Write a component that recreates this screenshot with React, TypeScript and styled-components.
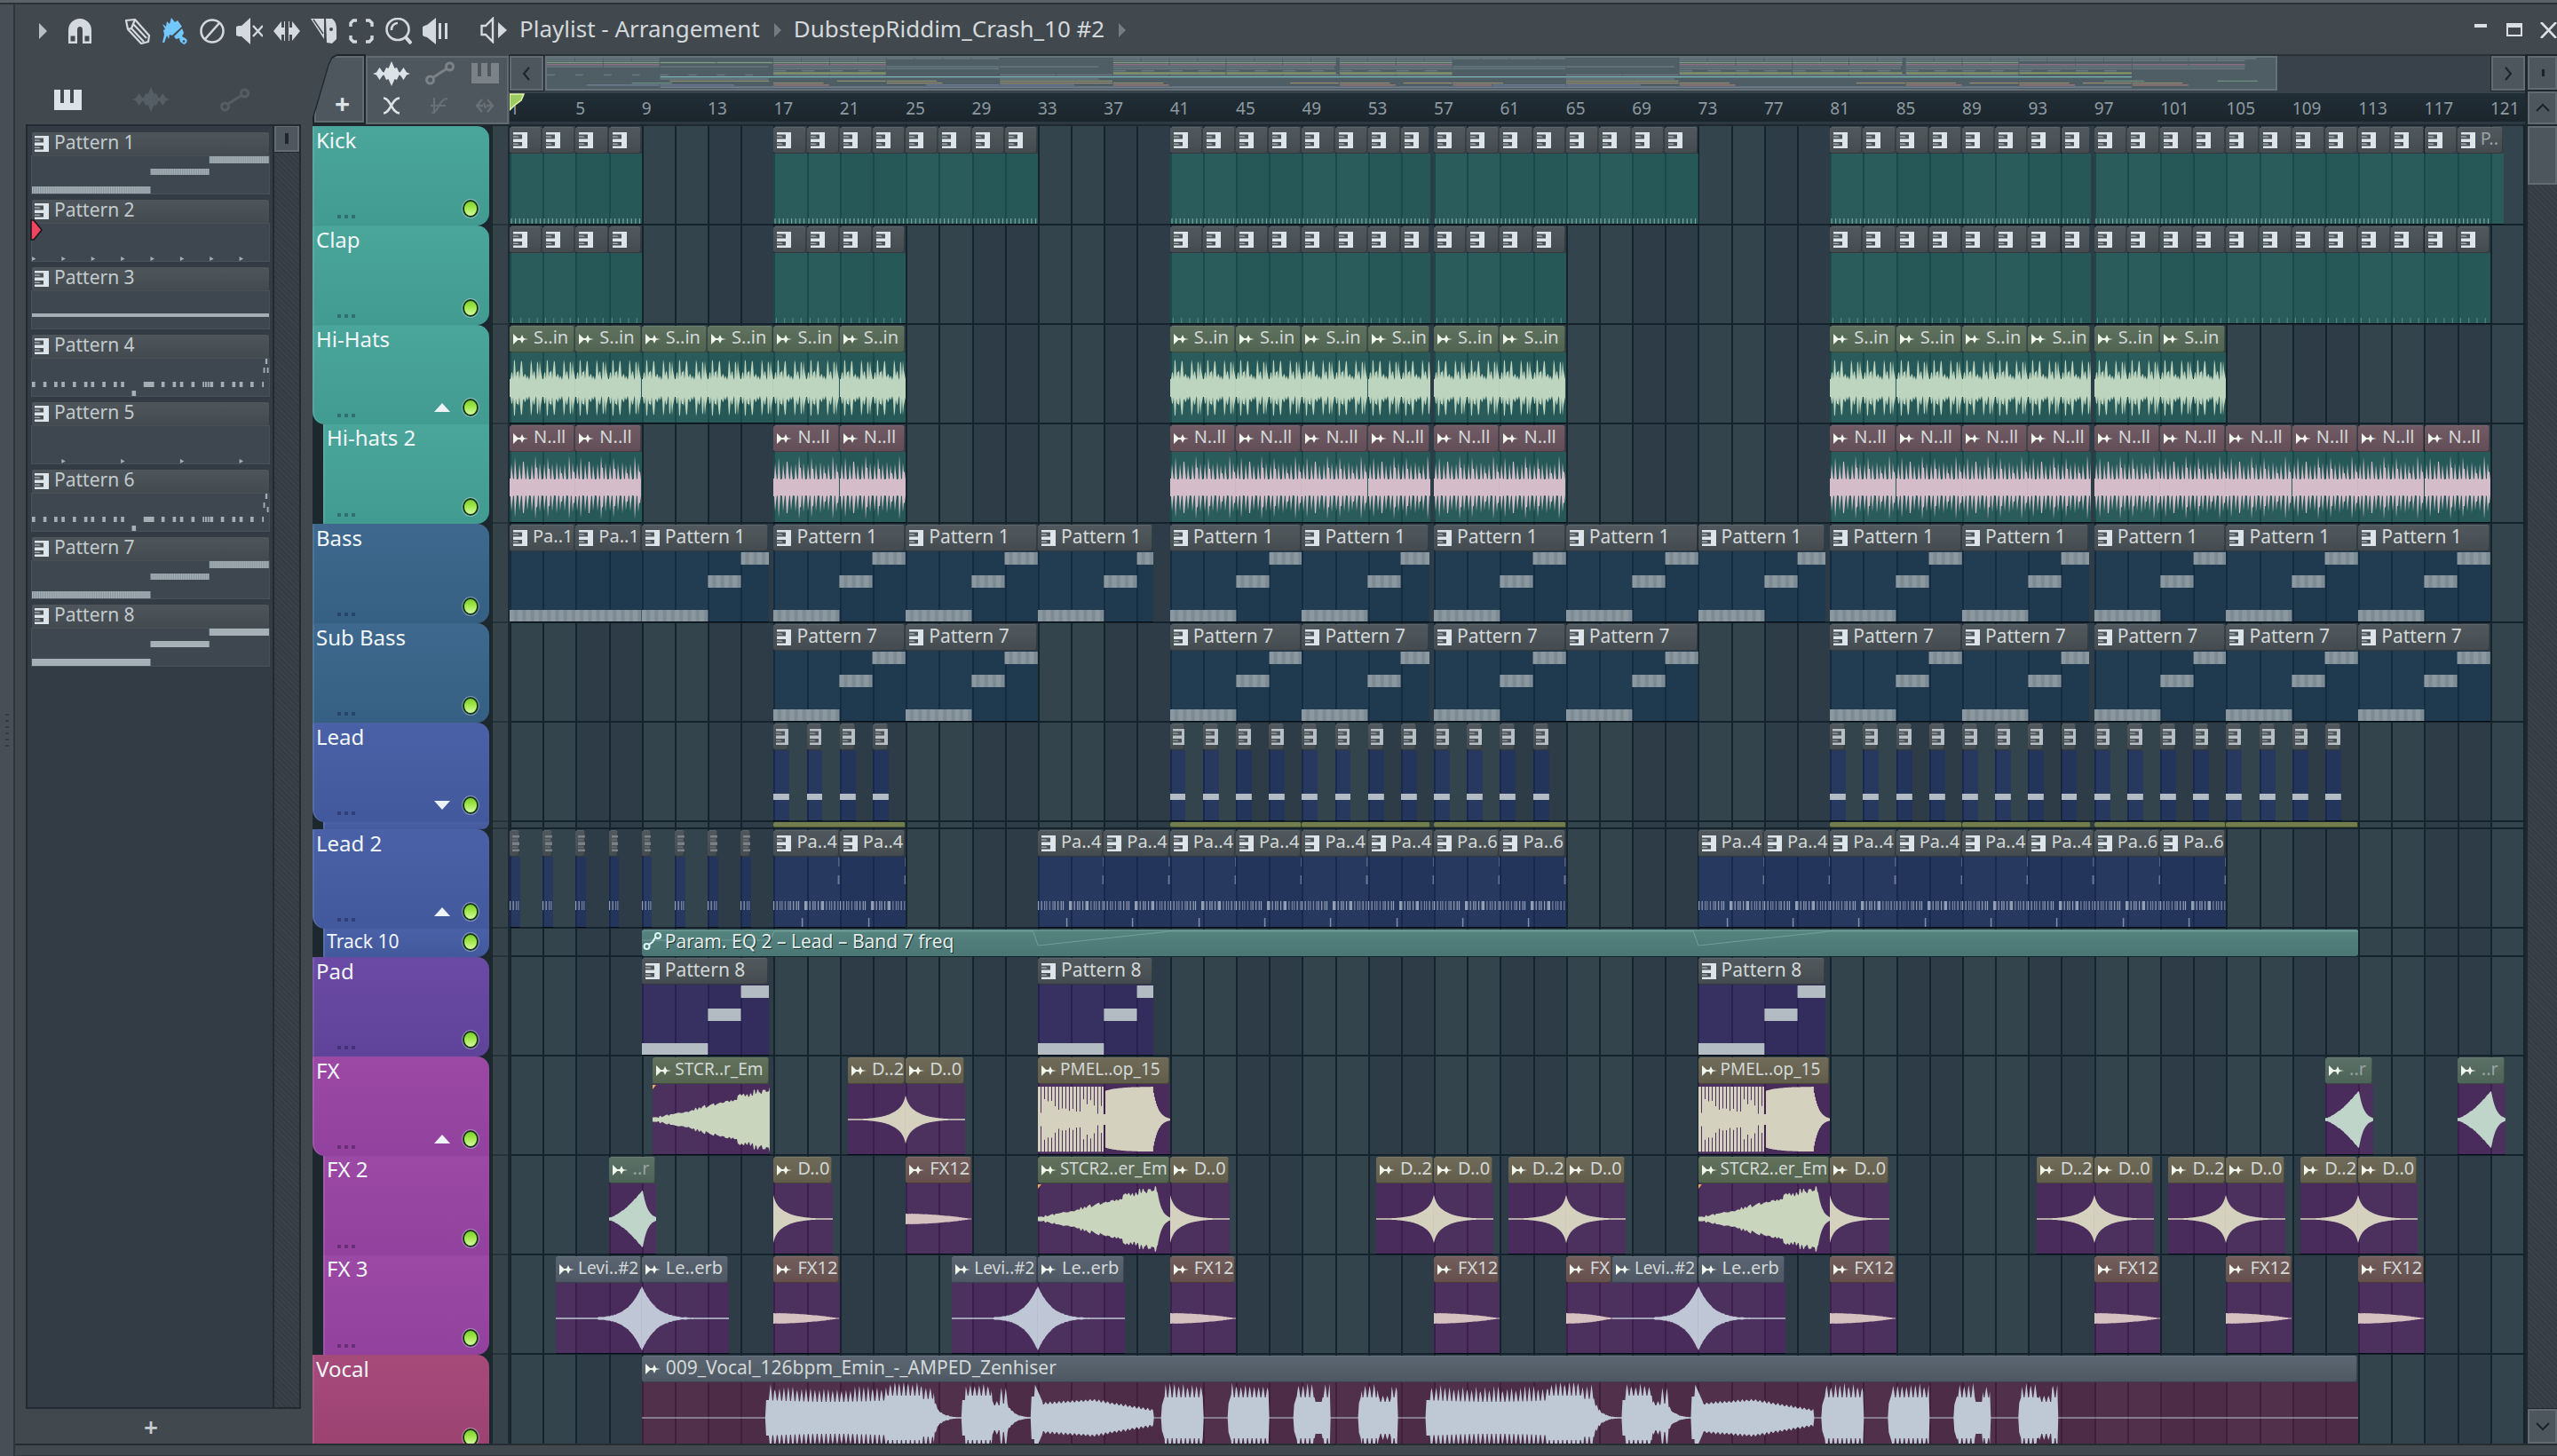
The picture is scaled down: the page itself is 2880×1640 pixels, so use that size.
import React from 'react';
import styled, { createGlobalStyle, css } from 'styled-components';

/* ---------- base ---------- */

const Global = createGlobalStyle`
  * { box-sizing: border-box; }
  html, body { margin: 0; padding: 0; background: #41494f; }
  body { font-family: "Noto Sans", "Open Sans", sans-serif; color: #d5dadd; overflow: hidden; }
  button { font: inherit; color: inherit; border: 0; padding: 0; margin: 0; background: none; cursor: pointer; }
`;

const BARS = 122.1;
const PX = 18.6;
const pct = (bars: number) => `${(bars / BARS) * 100}%`;

/* ---------- icons ---------- */

const PianoKeys = ({ dim = false }: { dim?: boolean }) => (
  <svg width="16" height="18" viewBox="0 0 16 18" fill={dim ? '#8a9297' : '#dce6ea'} preserveAspectRatio="xMinYMid slice">
    <path d="M0 0H16V18H0V15.500H10V11H0V7.500H10V2.600H0Z" />
    <path d="M0 4.200H5L7 5.800H0ZM0 12.400H5L7 14H0Z" opacity="0.6" />
  </svg>
);

const SampleIcon = ({ color }: { color: string }) => (
  <svg width="17" height="12" viewBox="0 0 17 12" fill={color}>
    <path d="M0 0L5.200 5H7.500L8.600 4.200L10 1L11.400 4.200L12.500 5.200L17 6L12.500 6.800L11.400 7.800L10 11L8.600 7.800L7.500 7H5.200L0 12Z" />
  </svg>
);

const PianoUp = () => (
  <svg width="31" height="23" viewBox="0 0 31 23" fill="currentColor">
    <path d="M0 0H7V15H11V0H13V15H13V0H18V15H22V0H24V15H24V0H31V23H0Z" />
  </svg>
);

const WaveBig = () => (
  <svg width="42" height="28" viewBox="0 0 42 28" fill="currentColor">
    <path d="M0 14L4 12.500L7.500 7L11 12L12.500 12.500L15 7L17.500 8L21 0L24.500 8L27 7L29.500 12.500L31 12L34.500 7L38 12.500L42 14L38 15.500L34.500 21L31 16L29.500 15.500L27 21L24.500 20L21 28L17.500 20L15 21L12.500 15.500L11 16L7.500 21L4 15.500Z" />
  </svg>
);

const NodeIcon = () => (
  <svg width="33" height="27" viewBox="0 0 33 27" fill="none" stroke="currentColor" strokeWidth="3">
    <circle cx="5.500" cy="21" r="4" />
    <circle cx="27.500" cy="6" r="4" />
    <path d="M9 18L24 8.500" />
  </svg>
);

const TI: Record<string, React.ReactNode> = {
  play: <path d="M11 6L20 15L11 24Z" fill="#b9c0c4" />,
  magnet: (
    <>
      <path d="M2 29V14A13 13 0 0 1 28 14V29H18V14A3 4 0 0 0 12 14V29Z" />
      <path d="M4.500 20.500H9.500V26.500H4.500ZM20.500 20.500H25.500V26.500H20.500Z" fill="#41494f" />
    </>
  ),
  pencil: (
    <g fill="none" stroke="currentColor" strokeWidth="2.200" strokeLinejoin="round">
      <path d="M2 3L12 2L28 20L27 27L19 29L4 13Z" />
      <path d="M4 13L8 12L12 2M8 12L22 27M10 7L25 23" />
    </g>
  ),
  brush: (
    <g fill="#72c7ff">
      <path d="M1 7L5 10L6 4L9 7L11 0L15 5L18 3L23 10L12 20L9 19L8 24L6 20L3 28L1 28L3 19L2 14L4 13Z" />
      <path d="M14 21L23 12L25 17L23 21L28 24A4 4 0 0 1 25 30L21 27L20 23L16 24Z" />
      <path d="M12.500 20.500L23.500 10.500" stroke="#41494f" strokeWidth="1.200" />
      <circle cx="25" cy="26.500" r="1.300" fill="#41494f" />
    </g>
  ),
  forbid: (
    <g fill="none" stroke="currentColor" strokeWidth="2.600">
      <circle cx="15" cy="15" r="12.500" />
      <path d="M7 24L23 6" />
    </g>
  ),
  mute: (
    <>
      <path d="M0 11C0 9 4 9 6 9L16 0V30L6 21C4 21 0 21 0 19Z" />
      <path d="M19 9L30 21M30 9L19 21" stroke="currentColor" strokeWidth="2.400" />
    </>
  ),
  slip: <path d="M0 15L9 4V11H12V4H13V26H12V19H9V26ZM30 15L21 4V11H18V4H17V26H18V19H21V26Z" />,
  slice: (
    <>
      <path d="M0 1H15V24Z" />
      <path d="M3 2L14 18" stroke="#41494f" strokeWidth="1.500" />
      <path d="M17 1H24C28 4 29 8 29 14V24L24 29L18 28Z" />
      <circle cx="23" cy="13" r="2" fill="#41494f" />
    </>
  ),
  select: (
    <path d="M3 10V6L6 3H10M20 3H24L27 6V10M27 20V24L24 27H20M10 27H6L3 24V20" fill="none" stroke="currentColor" strokeWidth="3.400" />
  ),
  zoom: (
    <g fill="none" stroke="currentColor">
      <ellipse cx="14" cy="13" rx="12.500" ry="12" strokeWidth="2.600" />
      <path d="M7 14A7 7 0 0 1 14 6" strokeWidth="2.600" />
      <path d="M23 22L29 29" strokeWidth="4" />
    </g>
  ),
  playback: (
    <>
      <path d="M0 11C0 9 3 9 5 8L15 0V30L5 22C3 21 0 21 0 19Z" />
      <path d="M18 6H21V24H18ZM25 6H28V24H25Z" />
    </>
  ),
  preview: (
    <>
      <path d="M1.500 10H6L14 2V28L6 20H1.500Z" fill="none" stroke="currentColor" strokeWidth="2.400" />
      <path d="M20 6L30 15L20 24Z" />
    </>
  ),
};

const ToolIcon = ({ name }: { name: string }) => (
  <svg width="30" height="30" viewBox="0 0 30 30" fill="currentColor" aria-hidden>
    {TI[name]}
  </svg>
);

/* ---------- frame ---------- */

const App$ = styled.div`
  height: 100vh;
  display: flex;
  flex-direction: column;
  background: #41494f;
`;
const TopStrip = styled.div`
  height: 5px;
  flex: none;
  background: #5a626a;
  border-bottom: 2px solid #2b3339;
`;
const Shell = styled.div`
  flex: 1;
  min-height: 0;
  display: flex;
`;
const Grip = styled.div`
  width: 17px;
  flex: none;
  border-right: 2px solid #2f373d;
  background: #474e55;
  display: flex;
  flex-direction: column;
  align-items: center;
  justify-content: center;
  gap: 5px;
  i { width: 4px; height: 2px; background: #343b41; }
`;
const Main = styled.div`
  flex: 1;
  min-width: 0;
  display: flex;
  flex-direction: column;
`;
const Bottom = styled.div`
  height: 14px;
  flex: none;
  border-top: 2px solid #252d33;
  border-bottom: 1px solid #343b41;
`;
const Toolbar = styled.header`
  height: 56px;
  flex: none;
  display: flex;
  align-items: center;
  padding: 2px 0 0 10px;
  color: #d3d9dc;
`;
const ToolGroup = styled.div`
  display: flex;
  padding: 2px 23px 0 0;
`;
const ToolBtn = styled.button`
  width: 42px;
  height: 42px;
  display: grid;
  place-items: center;
`;
const Crumb = styled.span`
  font-size: 26px;
  line-height: 36px;
  padding: 0 16px 4px 8px;
  color: #d3d8da;
  white-space: nowrap;
`;
const Caret = styled.i`
  border-left: 8px solid #737c82;
  border-top: 8px solid transparent;
  border-bottom: 8px solid transparent;
  margin-right: 6px;
`;
const WinButtons = styled.div`
  margin-left: auto;
  display: flex;
`;
const WinBtn = styled.button<{ $last?: boolean }>`
  width: ${(p) => (p.$last ? 29 : 38)}px;
  height: 38px;
  display: grid;
  place-items: center;
  justify-items: ${(p) => (p.$last ? 'end' : 'center')};
`;
const Work = styled.div`
  flex: 1;
  min-height: 0;
  display: flex;
`;

/* ---------- pattern browser ---------- */

const Browser = styled.aside`
  width: 335px;
  flex: none;
  padding: 0 13px 0 12px;
  display: flex;
  flex-direction: column;
`;
const BrowserTabs = styled.div`
  height: 79px;
  padding: 24px 24px 0 0;
  display: flex;
`;
const BrowserTab = styled.button<{ $on?: boolean }>`
  width: 94px;
  height: 54px;
  display: grid;
  place-items: center;
  color: ${(p) => (p.$on ? '#dbe3e7' : '#555e64')};
`;
const ListFrame = styled.div`
  flex: 1;
  min-height: 0;
  display: flex;
  border: 2px solid #222b31;
  background: #333c44;
`;
const PatternList = styled.div`
  flex: 1;
  padding: 7px 3px 0 4px;
  display: flex;
  flex-direction: column;
  gap: 6px;
`;
const hatch = css`
  background: repeating-linear-gradient(45deg, #343b42 0 2px, #3a4148 2px 4px);
`;
const ListScroll = styled.div`
  width: 30px;
  border-left: 2px solid #222b31;
  ${hatch}
`;
const ListThumb = styled.div`
  height: 29px;
  background: #4f565d;
  border: 2px solid #646c73;
  border-top-width: 1px;
  outline: 1px solid #222b31;
  display: grid;
  place-items: center;
  &::after { content: ''; width: 4px; height: 12px; background: #20272c; }
`;
const PatternItem = styled.button`
  position: relative;
  display: block;
  text-align: left;
  width: 100%;
`;
const PatternHead = styled.div`
  height: 26px;
  margin: 0 1px;
  padding-left: 3px;
  display: flex;
  align-items: center;
  gap: 6px;
  background: linear-gradient(#4e565b, #434b51);
  border-radius: 2px;
  font-size: 21px;
  line-height: 22px;
  color: #c3cacd;
  span { padding-bottom: 4px; }
`;
const PatternBody = styled.div`
  height: 44px;
  border: 1px solid #48515a;
  background: #3e4750;
  svg { display: block; width: 100%; height: 42px; }
`;
const RedMark = styled.svg`
  position: absolute;
  left: -1px;
  top: 22px;
`;
const AddPattern = styled.button`
  height: 39px;
  font-size: 28px;
  line-height: 40px;
  padding-right: 28px;
  color: #c5ccd0;
  font-weight: 600;
`;

const P4 = [0, 28, 55, 73, 101, 129, 146, 174, 202, 220, 276, 282, 288, 294, 320, 348, 366, 394, 422, 428, 434, 440, 467, 495, 513, 540, 569];

const MiniNotes = ({ n }: { n: number }) => {
  const c = '#a4afb5';
  if (n === 1 || n === 7 || n === 8) {
    const f = n === 8 ? '#a6b0b7' : 'url(#mini)';
    return (
      <svg viewBox="0 0 270 42" preserveAspectRatio="none">
        <rect x="0" y="34" width="135" height="8" fill={f} />
        <rect x="135" y="14" width="67" height="7" fill={f} />
        <rect x="202" y="0" width="68" height="8" fill={f} />
      </svg>
    );
  }
  if (n === 3) {
    return (
      <svg viewBox="0 0 270 42" preserveAspectRatio="none">
        <rect y="25" width="270" height="4" fill={c} />
      </svg>
    );
  }
  if (n === 2 || n === 5) {
    const xs = n === 2 ? [0, 1, 2, 3, 4, 5, 6, 7] : [1, 3, 5, 7];
    return (
      <svg viewBox="0 0 270 42" preserveAspectRatio="none" fill={c}>
        {xs.map((i) => (
          <path key={i} d={`M${i * 33.75} 37l4.500 2.500l-4.500 2.500z`} />
        ))}
      </svg>
    );
  }
  return (
    <svg viewBox="0 0 586 42" preserveAspectRatio="none" fill={c}>
      {P4.map((x) => (
        <rect key={x} x={x} y="26" width={x === 422 || x === 428 || x === 434 || x === 569 ? 4 : 8} height="6" />
      ))}
      <rect x="247" y="36" width="10" height="6" />
      <rect x="577" y="0" width="5" height="6" />
      <rect x="572" y="10" width="4" height="6" />
      <rect x="581" y={n === 6 ? 15 : 10} width="4" height="6" />
    </svg>
  );
};

/* ---------- playlist head ---------- */

const Playlist = styled.section`
  flex: 1;
  min-width: 0;
  display: flex;
  flex-direction: column;
`;
const HeadRow = styled.div`
  height: 81px;
  flex: none;
  display: flex;
  border-bottom: 2px solid #1d272d;
`;
const HeadTools = styled.div`
  width: 222px;
  flex: none;
  display: flex;
`;
const slant = css`clip-path: polygon(0 100%, 0 90%, 30% 13%, 36% 4%, 46% 0, 100% 0, 100% 100%);`;
const AddTab = styled.div`
  width: 60px;
  padding: 2px;
  background: #1d272d;
  ${slant}
`;
const AddTrack = styled.button`
  width: 100%;
  height: 100%;
  padding: 30px 0 0 7px;
  font-size: 30px;
  line-height: 44px;
  font-weight: 700;
  color: #dde3e6;
  background: #4f575e;
  border: 2px solid #636b72;
  ${slant}
`;
const ToolBox = styled.div`
  flex: 1;
  margin: 2px 1px 0 0;
  border: 2px solid #636b72;
  background: #4f575e;
  display: grid;
  grid-template-columns: 55px 53px 1fr;
  grid-template-rows: 34px 1fr;
`;
const BoxBtn = styled.button<{ $tone: string }>`
  display: grid;
  place-items: center;
  padding-right: 1px;
  padding-top: 1px;
  color: ${(p) => p.$tone};
`;
const HeadRight = styled.div`
  flex: 1;
  min-width: 0;
  display: flex;
  flex-direction: column;
`;
const OverviewRow = styled.div`
  height: 43px;
  flex: none;
  display: flex;
  background: #39414a;
  border-top: 2px solid #2a3238;
`;
const ScrollBtn = styled.button<{ $w?: number; $h?: number }>`
  width: ${(p) => p.$w ?? 38}px;
  height: ${(p) => p.$h ?? 39}px;
  flex: none;
  display: grid;
  place-items: center;
  background: #4d555d;
  border: 2px solid #636b72;
  outline: 1px solid #1d272d;
  svg { fill: none; stroke: #1c2328; stroke-width: 2; }
`;
const OverviewTrack = styled.div`
  flex: 1;
  padding-left: 2px;
`;
const OverviewThumb = styled.div`
  width: 89%;
  height: 39px;
  border: 2px solid #66727a;
  background: #4f5d65;
  svg { display: block; width: 100%; height: 35px; }
`;
const Ruler = styled.div`
  flex: 1;
  min-height: 0;
  position: relative;
  display: grid;
  grid-template-columns: repeat(30, 4fr) 2.1fr;
  background: linear-gradient(#222e36, #1a252c);
  border-top: 1px solid #37434b;
  border-bottom: 3px solid #2c3942;
  font-size: 19px;
  line-height: 34px;
  color: #8e9aa0;
  span { min-width: 0; white-space: nowrap; }
`;
const StartMark = styled.svg`
  position: absolute;
  left: 0;
  top: 0;
`;
const SideHead = styled.div`
  width: 36px;
  flex: none;
  padding: 2px 0 0 3px;
  display: flex;
  flex-direction: column;
  gap: 2px;
  background: #1d272d;
`;

/* ---------- tracks ---------- */

const TrackArea = styled.div`
  flex: 1;
  min-height: 0;
  display: flex;
  overflow: hidden;
  background: #1d272e;
`;
const Heads = styled.div`
  width: 201px;
  flex: none;
`;
const Head = styled.div<{ $c: string; $h: number; $child?: boolean; $first: boolean; $last: boolean; $parent: boolean }>`
  position: relative;
  height: ${(p) => p.$h}px;
  margin-left: ${(p) => (p.$child ? 12 : 0)}px;
  margin-right: 2px;
  padding: ${(p) => (p.$h > 100 ? 1 : 0)}px 12px 0 4px;
  display: flex;
  justify-content: space-between;
  background: ${(p) => p.$c};
  box-shadow: inset 2px 0 rgba(255, 255, 255, 0.1);
  border-top: ${(p) => (p.$first ? '1px solid rgba(255,255,255,.06)' : '0')};
  border-top-right-radius: ${(p) => (p.$first ? '14px' : 0)};
  border-bottom-right-radius: ${(p) => (p.$last ? '14px' : 0)};
  border-bottom-left-radius: ${(p) => (p.$parent ? '14px' : 0)};
`;
const TrackName = styled.span<{ $small?: boolean }>`
  font-size: ${(p) => (p.$small ? 21 : 24)}px;
  line-height: 28px;
  color: #f1f6f8;
  white-space: nowrap;
`;
const HeadControls = styled.div<{ $small?: boolean }>`
  display: flex;
  align-items: center;
  align-self: ${(p) => (p.$small ? 'center' : 'flex-end')};
  gap: 14px;
  padding-bottom: ${(p) => (p.$small ? 2 : 9)}px;
`;
const Led = styled.input`
  appearance: none;
  width: 18px;
  height: 20px;
  margin: 0;
  border-radius: 50%;
  border: 2px solid #183a1c;
  outline: 1px solid rgba(255, 255, 255, 0.35);
  background: linear-gradient(#7ccf2e, #a6ea4e 50%, #d8f9a4);
`;
const Fold = styled.button<{ $down?: boolean }>`
  width: 18px;
  height: 10px;
  background: #eef3f8;
  clip-path: ${(p) => (p.$down ? 'polygon(0 0, 100% 0, 50% 100%)' : 'polygon(50% 0, 100% 100%, 0 100%)')};
`;
const Dots = styled.span<{ $child?: boolean }>`
  position: absolute;
  left: ${(p) => (p.$child ? 16 : 28)}px;
  bottom: 8px;
  display: flex;
  gap: 4px;
  i { width: 4px; height: 4px; background: rgba(0, 0, 30, 0.28); }
`;
const Faders = styled.div`
  width: 21px;
  flex: none;
  background: #35424a;
  border-left: 2px solid #1d272e;
  border-right: 2px solid #1d2a33;
`;
const Fader = styled.div<{ $h: number }>`
  height: ${(p) => p.$h}px;
  border-bottom: 2px solid #25323a;
`;
const Lanes = styled.div`
  position: relative;
  flex: 1;
  min-width: 0;
`;
const Grid = styled.div`
  position: absolute;
  inset: 0;
  display: grid;
  grid-template-columns: repeat(61, 2fr) 0.1fr;
`;
const GridCell = styled.i<{ $dark: boolean }>`
  min-width: 0;
  background: ${(p) => (p.$dark ? '#2d3c46' : '#33444d')};
  border-left: 2px solid #14232c;
`;
const Lane = styled.div<{ $h: number }>`
  position: relative;
  height: ${(p) => p.$h}px;
  border-bottom: 2px solid #14232c;
`;
const ClipBox = styled.div`
  position: absolute;
  top: 1px;
  bottom: -1px;
  display: flex;
  flex-direction: column;
  overflow: hidden;
  border-bottom: 1px solid #050d14;
`;
const ClipHead = styled.div<{ $c: string; $fade?: boolean; $size?: number }>`
  height: 30px;
  flex: none;
  margin-right: 1px;
  padding-left: 4px;
  display: flex;
  align-items: center;
  gap: ${(p) => (p.$size === 19 ? 4 : 6)}px;
  overflow: hidden;
  border-radius: 3px;
  box-shadow: inset 0 1px rgba(255, 255, 255, 0.08), inset -1px -1px rgba(0, 0, 0, 0.25);
  background: linear-gradient(rgba(255, 255, 255, 0.05), rgba(0, 0, 0, 0.06)), ${(p) => p.$c};
  font-size: ${(p) => p.$size ?? 20}px;
  color: ${(p) => (p.$fade ? '#98a3a3' : '#d3d8d8')};
  svg { flex: none; }
  span { line-height: 26px; padding-bottom: 4px; white-space: nowrap; }
`;
const NarrowHead = styled(ClipHead)`
  padding-left: 3px;
  padding-right: 1px;
  svg { opacity: 0.75; }
`;
const ClipBody = styled.div<{ $c: string }>`
  flex: 1;
  min-height: 0;
  background: ${(p) => p.$c};
  svg { display: block; width: 100%; height: 80px; }
`;
const SlimClip = styled.div`
  position: absolute;
  top: 0;
  bottom: 0;
  border-radius: 2px;
  background: #727e4d;
  border-right: 1px solid #3a4328;
  border-bottom: 1px solid #4f5a35;
`;
const AutoClip = styled.div`
  position: absolute;
  top: 1px;
  bottom: -1px;
  border-radius: 3px;
  background: linear-gradient(#56847f, #4a7673);
  box-shadow: inset 0 2px #5f908b;
  svg.curve { display: block; width: 100%; height: 100%; }
`;
const AutoLabel = styled.div`
  position: absolute;
  left: 1px;
  top: 0;
  display: flex;
  align-items: center;
  gap: 3px;
  font-size: 21px;
  line-height: 26px;
  color: #e3ecea;
  text-shadow: 1px 1px #16302f;
  white-space: nowrap;
`;
const VScroll = styled.div`
  width: 36px;
  flex: none;
  display: flex;
  flex-direction: column;
  justify-content: space-between;
  border-left: 3px solid #1d272d;
  ${hatch}
`;
const VThumb = styled.div`
  height: 66px;
  background: #4d555d;
  border: 2px solid #636b72;
`;

/* ---------- wave shapes ---------- */

const rnd = (i: number) => {
  const s = Math.sin(i * 127.1 + 11.7) * 43758.5453;
  return s - Math.floor(s);
};

const HATS = [10, 17, 18, 10, 32, 30, 12, 18, 18, 20, 10, 22, 31, 29, 14, 12, 16, 15, 10, 14, 12, 9, 14, 32, 27, 13, 18, 19, 12, 9, 30, 28, 12, 31, 20, 15, 10];
const NOISE = [27, 34, 27, 29, 26, 27, 36, 28];

const vocal = (bar: number, i: number) => {
  if (bar < 16.5 || bar > 96.5) return 0.6;
  const b = bar >= 56.5 ? bar - 40 : bar;
  const k = i % 5;
  const spike = k === 0 ? 1 : k === 1 || k === 4 ? 0.55 : 0;
  const wob = 0.65 + 0.35 * rnd(Math.floor(i / 5));
  const burst = (s: number) => {
    const t = b - s;
    return t < 0.2 ? 14 + t * 60 : 23 + 17 * spike * wob;
  };
  if (b < 26.7) {
    const u = (b - 16.5) / 10.2;
    if (u < 0.02) return 20;
    const base = u > 0.72 && u < 0.92 ? 25 : 20 - 2 * Math.sin(u * 4);
    return base + 18 * spike * wob;
  }
  if (b < 28.4) return Math.max(0.8, 18 * Math.exp(-(b - 26.7) * 2.4) * (0.8 + 0.4 * rnd(i)));
  if (b < 30.2) return b < 28.6 ? 20 : 25 + 14 * spike * wob;
  if (b < 30.7) return 14 + 5 * spike;
  if (b < 31.2) return 16 + 18 * spike;
  if (b < 32.6) return Math.max(0.8, 13 * Math.exp(-(b - 31.2) * 2.2) * (0.8 + 0.3 * rnd(i)));
  if (b < 33.3) return b < 32.8 ? 24 : 38 - (b - 32.8) * 42;
  if (b < 40) {
    const t = (b - 33.3) / 6.7;
    return (t < 0.45 ? 15 + t * 9 : 19 - (t - 0.45) * 21) + 3 * spike * wob;
  }
  if (b > 40.5 && b < 43) return burst(40.5);
  if (b > 44.5 && b < 47) return burst(44.5);
  if (b > 48.5 && b < 50.7) return b > 49.8 && b < 50.2 ? 18 : burst(48.5);
  if (b > 52.4 && b < 54.8) return b > 53.6 && b < 54.4 ? 18 + 7 * spike : burst(52.4);
  return 0.6;
};

type Shape = (x: number, w: number) => number;
const cone = (t: number, x: number) =>
  1 + 30 * Math.pow(t, 1.2) + (t > 0.35 ? 8 * Math.min(1, t * 1.1) : 2) * rnd(Math.floor(x / 2));

const SHAPES: Record<string, Shape> = {
  hats: (x) => HATS[Math.floor(((x % 37.2) / 37.2) * 37)],
  noise: (x) => {
    const p = ((x % 37.2) / 37.2) * 8;
    const k = Math.floor(p) % 8;
    const f = p - Math.floor(p);
    return f < 0.22 ? 10 : f < 0.45 ? NOISE[k] : f < 0.7 ? NOISE[k] * 0.62 : 9;
  },
  rise: (x, w) => cone(x / w, x),
  riseFall: (x, w) => {
    const t = x / w;
    return t > 0.9 ? Math.max(1, 35 * Math.exp(-(t - 0.9) * 30)) : cone(Math.min(1, t / 0.88), x);
  },
  pmel: (x, w) => {
    const t = x / w;
    if (t < 0.49) return x % 4 === 3 ? 6 + 20 * rnd(x) : 37;
    if (t < 0.505) return 6;
    if (t < 0.87) return 37 - 5 * Math.exp(-(t - 0.5) * 10);
    return Math.max(1, 32 * Math.exp(-(t - 0.87) * 26));
  },
  up: (x, w) => Math.max(0.7, 20 * Math.exp(-(w - x) / 15) + 7 * Math.exp(-(w - x) / 2.5)),
  down: (x) => Math.max(0.7, 20 * Math.exp(-x / 15) + 7 * Math.exp(-x / 2.5)),
  swellUp: (x, w) => Math.max(0.7, 36 * Math.exp(-Math.pow((w - x) / 15, 1.05)) + rnd(x) - 0.5),
  swellDown: (x) => Math.max(0.7, 36 * Math.exp(-Math.pow(x / 15, 1.05)) + rnd(x) - 0.5),
  rev: (x, w) => {
    const t = x / w;
    return t < 0.7 ? 1 + 31 * Math.pow(t / 0.7, 1.5) + rnd(x) : Math.max(0.8, 33 * Math.exp(-(t - 0.7) * 10));
  },
  fx: (x, w) => Math.max(0.6, 5.6 * (1 - Math.pow(x / w, 2)) + 0.4 * rnd(x)),
  vocal: (x) => vocal(9 + x / PX, x),
};

const wavePath = (shape: string, w: number) => {
  const n = Math.round(w);
  const f = SHAPES[shape];
  const step = shape === 'pmel';
  let top = 'M0 40';
  let bottom = '';
  for (let i = 0; i < n; i++) {
    const a = Math.min(40, f(i, n));
    if (step) {
      top += `L${i} ${(40 - a).toFixed(1)}H${i + 1}`;
      bottom = `L${i + 1} ${(40 + a * 0.98).toFixed(1)}H${i}` + bottom;
    } else {
      top += `L${i} ${(40 - a).toFixed(1)}`;
      bottom = `L${i} ${(40 + a).toFixed(1)}` + bottom;
    }
  }
  if (!step) top += `L${n} ${(40 - f(n, n)).toFixed(1)}L${n} ${(40 + f(n, n)).toFixed(1)}`;
  return top + bottom + 'Z';
};

/* ---------- clip data ---------- */

type Clip = { s: number; e: number; label?: string; kind: string; icon: 'p' | 'w'; fade?: boolean; narrow?: boolean };

const HEAD: Record<string, string> = {
  hats: '#566a56', noise: '#69535d', rise: '#5a6a53', riseFall: '#5a6a53', pmel: '#68634f', up: '#68634f', down: '#68634f',
  swellUp: '#535d6b', swellDown: '#535d6b', rev: '#53695e', fx: '#6b5553', vocal: '#535e6a',
};
const WAVE: Record<string, string> = {
  hats: '#bdd4be', noise: '#d4bdc9', rise: '#cad5bd', riseFall: '#cad5bd', pmel: '#d5d1bf', up: '#d5d1bf', down: '#d5d1bf',
  swellUp: '#bfc6d5', swellDown: '#bfc6d5', rev: '#bfd5ca', fx: '#d5c1bf', vocal: '#bfc9d5',
};

const run = (from: number, to: number, len: number, kind: string, icon: 'p' | 'w', label?: string, extra: Partial<Clip> = {}): Clip[] => {
  const out: Clip[] = [];
  for (let b = from; b < to; b += len) {
    const e = b + len;
    out.push({ s: b, e: e === 57 || e === 97 ? e - 0.2 : e, kind, icon, label, ...extra });
  }
  return out;
};
const one = (s: number, e: number, kind: string, label: string, icon: 'p' | 'w' = 'w', extra: Partial<Clip> = {}): Clip => ({ s, e, kind, label, icon, ...extra });
const hits = (starts: [number, number][], len: number, kind: string): Clip[] =>
  starts.flatMap(([a, b]) => {
    const r: Clip[] = [];
    for (let x = a; x < b; x += 2) r.push({ s: x, e: x + len, kind, icon: 'p', narrow: true, fade: len < 0.9 });
    return r;
  });
const patt = (list: number[][], label: string, kind: string) => list.map(([s, e]) => one(s, e, kind, label, 'p'));

const SUB = [[17, 25], [25, 33], [41, 49], [49, 56.7], [57, 65], [65, 73], [81, 89], [89, 96.7], [97, 105], [105, 113], [113, 121]];
const fours = (a: number[], label: string) => a.map((s) => one(s, s + 4, 'seq', label, 'p'));

type Track = { name: string; c: string; tint: string; h: number; group: number; child?: boolean; parent?: boolean; fold?: 'up' | 'down'; clips: Clip[]; map: string };

const TEAL = 'linear-gradient(#4aa59a, #429b91)';
const STEEL = 'linear-gradient(#3e688d, #365f84)';
const BLUE = 'linear-gradient(#4a61a7, #42599c)';
const VIOLET = 'linear-gradient(#6b4aa5, #5f4399)';
const PINK = 'linear-gradient(#9b49a4, #92419e)';
const ROSE = 'linear-gradient(#a64a7a, #9b4271)';
const tTeal = 'rgba(31,116,104,.5)';
const tSteel = 'rgba(17,54,88,.5)';
const tBlue = 'rgba(27,46,114,.5)';
const tPad = 'rgba(57,30,116,.5)';
const tFx = 'rgba(101,28,112,.5)';
const tRose = 'rgba(109,28,72,.5)';

const TRACKS: Track[] = [
  { name: 'Kick', c: TEAL, tint: tTeal, h: 112, group: 0, map: '#6b7c84', clips: [
    ...run(1, 9, 2, 'kick', 'p'), ...run(17, 33, 2, 'kick', 'p'), ...run(41, 73, 2, 'kick', 'p'), ...run(81, 119, 2, 'kick', 'p'),
    one(119, 121.8, 'kick', 'P..', 'p', { fade: true }) ] },
  { name: 'Clap', c: TEAL, tint: tTeal, h: 112, group: 1, map: '#6b7c84', clips: [
    ...run(1, 9, 2, 'clap', 'p'), ...run(17, 25, 2, 'clap', 'p'), ...run(41, 65, 2, 'clap', 'p'), ...run(81, 121, 2, 'clap', 'p') ] },
  { name: 'Hi-Hats', c: TEAL, tint: tTeal, h: 112, group: 2, parent: true, fold: 'up', map: '#7f9e80', clips: [
    ...run(1, 25, 4, 'hats', 'w', 'S..in'), ...run(41, 65, 4, 'hats', 'w', 'S..in'), ...run(81, 105, 4, 'hats', 'w', 'S..in') ] },
  { name: 'Hi-hats 2', c: TEAL, tint: tTeal, h: 112, group: 2, child: true, map: '#977589', clips: [
    ...run(1, 9, 4, 'noise', 'w', 'N..ll'), ...run(17, 25, 4, 'noise', 'w', 'N..ll'), ...run(41, 65, 4, 'noise', 'w', 'N..ll'), ...run(81, 121, 4, 'noise', 'w', 'N..ll') ] },
  { name: 'Bass', c: STEEL, tint: tSteel, h: 112, group: 3, map: '#6b7c84', clips: [
    one(1, 5, 'steps', 'Pa..1', 'p'), one(5, 9, 'steps', 'Pa..1', 'p'),
    ...patt([[9, 16.7], [17, 25], [25, 33], [33, 40], [41, 49], [49, 56.7], [57, 65], [65, 73], [73, 80.7], [81, 89], [89, 96.7], [97, 105], [105, 113], [113, 121]], 'Pattern 1', 'steps') ] },
  { name: 'Sub Bass', c: STEEL, tint: tSteel, h: 112, group: 4, map: '#6b7c84', clips: patt(SUB, 'Pattern 7', 'steps') },
  { name: 'Lead', c: BLUE, tint: tBlue, h: 112, group: 5, parent: true, fold: 'down', map: '#6b7c84', clips: hits([[17, 25], [41, 65], [81, 113]], 0.96, 'stab') },
  { name: '', c: BLUE, tint: '', h: 8, group: 5, child: true, map: '#8a9a66', clips: [
    ...run(17, 25, 8, 'slim', 'w'), ...run(41, 65, 8, 'slim', 'w'), ...run(81, 113, 8, 'slim', 'w') ] },
  { name: 'Lead 2', c: BLUE, tint: tBlue, h: 112, group: 6, parent: true, fold: 'up', map: '#6b7c84', clips: [
    ...hits([[1, 17]], 0.63, 'seq'), ...fours([17, 21, 33, 37, 41, 45, 49, 53, 73, 77, 81, 85, 89, 93], 'Pa..4'), ...fours([57, 61, 97, 101], 'Pa..6') ] },
  { name: 'Track 10', c: BLUE, tint: '', h: 32, group: 6, child: true, map: '#79b6b5', clips: [one(9, 113, 'auto', 'Param. EQ 2 – Lead – Band 7 freq')] },
  { name: 'Pad', c: VIOLET, tint: tPad, h: 112, group: 7, map: '#6b7c84', clips: patt([[9, 16.7], [33, 40], [73, 80.7]], 'Pattern 8', 'solid') },
  { name: 'FX', c: PINK, tint: tFx, h: 112, group: 8, parent: true, fold: 'up', map: '#8a8f72', clips: [
    one(9.68, 16.75, 'rise', 'STCR..r_Em'), one(21.5, 25, 'up', 'D..2'), one(25, 28.6, 'down', 'D..0'),
    one(33, 41, 'pmel', 'PMEL..op_15'), one(73, 81, 'pmel', 'PMEL..op_15'),
    one(111, 113.9, 'rev', '..r', 'w', { fade: true }), one(119, 121.9, 'rev', '..r', 'w', { fade: true }) ] },
  { name: 'FX 2', c: PINK, tint: tFx, h: 112, group: 8, child: true, map: '#988c70', clips: [
    one(7, 9.9, 'rev', '..r', 'w', { fade: true }), one(17, 20.6, 'down', 'D..0'), one(25, 29, 'fx', 'FX12'),
    one(33, 41, 'riseFall', 'STCR2..er_Em'), one(41, 44.6, 'down', 'D..0'), one(53.5, 57, 'up', 'D..2'), one(57, 60.6, 'down', 'D..0'),
    one(61.5, 65, 'up', 'D..2'), one(65, 68.6, 'down', 'D..0'), one(73, 81, 'riseFall', 'STCR2..er_Em'), one(81, 84.6, 'down', 'D..0'),
    one(93.5, 97, 'up', 'D..2'), one(97, 100.6, 'down', 'D..0'), one(101.5, 105, 'up', 'D..2'), one(105, 108.6, 'down', 'D..0'),
    one(109.5, 113, 'up', 'D..2'), one(113, 116.6, 'down', 'D..0') ] },
  { name: 'FX 3', c: PINK, tint: tFx, h: 112, group: 8, child: true, map: '#a37a74', clips: [
    one(3.8, 9, 'swellUp', 'Levi..#2'), one(9, 14.3, 'swellDown', 'Le..erb'), one(17, 21, 'fx', 'FX12'),
    one(27.8, 33, 'swellUp', 'Levi..#2'), one(33, 38.3, 'swellDown', 'Le..erb'), one(41, 45, 'fx', 'FX12'), one(57, 61, 'fx', 'FX12'),
    one(65, 67.8, 'fx', 'FX'), one(67.8, 73, 'swellUp', 'Levi..#2'), one(73, 78.3, 'swellDown', 'Le..erb'),
    one(81, 85, 'fx', 'FX12'), one(97, 101, 'fx', 'FX12'), one(105, 109, 'fx', 'FX12'), one(113, 117, 'fx', 'FX12') ] },
  { name: 'Vocal', c: ROSE, tint: tRose, h: 112, group: 9, map: '#788699', clips: [one(9, 113, 'vocal', '009_Vocal_126bpm_Emin_-_AMPED_Zenhiser')] },
];

/* ---------- clip drawing ---------- */

const Drawing = ({ clip }: { clip: Clip }) => {
  const len = clip.e - clip.s;
  const w = len * PX;
  const box = { viewBox: `0 0 ${w.toFixed(2)} 80`, preserveAspectRatio: 'none' };
  if (SHAPES[clip.kind]) {
    return (
      <svg {...box}>
        <path d={wavePath(clip.kind, w)} fill={WAVE[clip.kind]} />
        {clip.kind.startsWith('rise') && <path d="M0 1H4L0 6Z" fill="#f0a860" />}
      </svg>
    );
  }
  if (clip.kind === 'kick' || clip.kind === 'clap') {
    const gap = clip.kind === 'kick' ? PX / 4 : PX / 2;
    const n = Math.floor(Math.min(2, len) * (clip.kind === 'kick' ? 4 : 2));
    return (
      <svg {...box} fill={clip.kind === 'kick' ? '#7aa39f' : '#4c8581'}>
        {Array.from({ length: n }, (_, i) => (
          <rect key={i} x={(i + 0.3) * gap} y="73" width="1.200" height="7" />
        ))}
      </svg>
    );
  }
  if (clip.kind === 'steps' || clip.kind === 'solid') {
    const f = clip.kind === 'steps' ? 'url(#stripes)' : '#b3bcc2';
    const full = len > 5;
    return (
      <svg {...box} fill={f}>
        <rect x="0" y="66" width={4 * PX} height="13" />
        {full && <rect x={4 * PX} y="27" width={2 * PX} height="14" />}
        {full && <rect x={6 * PX} y="1" width={2 * PX} height="14" />}
      </svg>
    );
  }
  if (clip.kind === 'stab') {
    return (
      <svg {...box}>
        <rect x="0" y="49" width={w} height="7" fill="#b3bcc4" />
      </svg>
    );
  }
  const k = (4 * PX) / 586;
  return (
    <svg {...box} fill="#9aa5ba">
      {P4.filter((x) => x * k < w).map((x) => (
        <rect key={x} x={x * k} y="50" width="1.200" height="10" opacity={x % 2 ? 0.7 : 0.95} />
      ))}
      {w > 50 && (
        <>
          <rect x={251 * k} y="69" width="1.500" height="11" opacity="0.8" />
          <rect x={578 * k} y="1" width="1" height="10" opacity="0.6" />
          <rect x={572 * k} y="21" width="2" height="10" opacity="0.6" />
        </>
      )}
    </svg>
  );
};

const labelSize = (clip: Clip) => {
  if (clip.kind === 'vocal' || clip.label?.startsWith('Pattern')) return 21;
  return (clip.label?.length ?? 0) > 7 ? 19 : 20;
};

const ClipView = ({ clip, track }: { clip: Clip; track: Track }) => {
  const place = { left: pct(clip.s - 1), width: pct(clip.e - clip.s) };
  if (clip.kind === 'slim') return <SlimClip style={place} />;
  if (clip.kind === 'auto') {
    return (
      <AutoClip style={place}>
        <svg className="curve" viewBox="0 0 104 30" preserveAspectRatio="none" fill="none" stroke="#8fb9b4" opacity="0.55">
          <path vectorEffect="non-scaling-stroke" d="M0 12H7.800L8 2H23.700L24 18L32 2H63.700L64 18L72 2H104" />
        </svg>
        <AutoLabel>
          <svg width="22" height="22" viewBox="0 0 22 22" fill="none" stroke="#dffaf6" strokeWidth="2">
            <circle cx="4.500" cy="17" r="3" />
            <circle cx="17" cy="5" r="3" />
            <path d="M7 15L11 12L14 7" />
          </svg>
          {clip.label}
        </AutoLabel>
      </AutoClip>
    );
  }
  const H = clip.narrow ? NarrowHead : ClipHead;
  const pattern = clip.icon === 'p';
  return (
    <ClipBox style={place}>
      <H $c={pattern ? '#485055' : HEAD[clip.kind]} $fade={clip.fade} $size={labelSize(clip)}>
        {pattern ? <PianoKeys dim={clip.narrow && clip.fade} /> : <SampleIcon color="#f0f6ec" />}
        {clip.label && <span>{clip.label}</span>}
      </H>
      <ClipBody $c={track.tint}>
        <Drawing clip={clip} />
      </ClipBody>
    </ClipBox>
  );
};

/* ---------- app ---------- */

const TOOLS = ['pencil', 'brush', 'forbid', 'mute', 'slip', 'slice', 'select', 'zoom', 'playback'];

const Chevron = ({ d }: { d: string }) => (
  <svg width="20" height="20" viewBox="0 0 20 20">
    <path d={d} />
  </svg>
);

export default function App() {
  return (
    <App$>
      <Global />
      <svg width="0" height="0" style={{ position: 'absolute' }} aria-hidden>
        <defs>
          <pattern id="stripes" width="9.300" height="80" patternUnits="userSpaceOnUse">
            <rect width="9.300" height="80" fill="#8b98a0" />
            <rect x="5" width="4" height="80" fill="#7c8a94" />
          </pattern>
          <pattern id="mini" width="2" height="42" patternUnits="userSpaceOnUse">
            <rect width="2" height="42" fill="#a7b2b8" />
            <rect x="1" width="1" height="42" fill="#87939a" />
          </pattern>
        </defs>
      </svg>
      <TopStrip />
      <Shell>
        <Grip>
          {Array.from({ length: 6 }, (_, i) => <i key={i} />)}
        </Grip>
        <Main>
          <Toolbar>
            <ToolGroup>
              <ToolBtn aria-label="Menu"><ToolIcon name="play" /></ToolBtn>
              <ToolBtn aria-label="Snap"><ToolIcon name="magnet" /></ToolBtn>
            </ToolGroup>
            <ToolGroup>
              {TOOLS.map((t) => (
                <ToolBtn key={t} aria-label={t}><ToolIcon name={t} /></ToolBtn>
              ))}
            </ToolGroup>
            <ToolBtn aria-label="Preview"><ToolIcon name="preview" /></ToolBtn>
            <Crumb>Playlist - Arrangement</Crumb>
            <Caret />
            <Crumb>DubstepRiddim_Crash_10 #2</Crumb>
            <Caret />
            <WinButtons>
              <WinBtn aria-label="Minimize">
                <svg width="20" height="20"><rect x="3" y="3" width="14" height="4" fill="#d9dfe2" /></svg>
              </WinBtn>
              <WinBtn aria-label="Maximize">
                <svg width="20" height="16"><path d="M1 0H19V15H1ZM3 5V13H17V5Z" fillRule="evenodd" fill="#d9dfe2" /></svg>
              </WinBtn>
              <WinBtn aria-label="Close" $last>
                <svg width="19" height="18"><path d="M1 0L18 18M18 0L1 18" stroke="#d9dfe2" strokeWidth="2.600" /></svg>
              </WinBtn>
            </WinButtons>
          </Toolbar>

          <Work>
            <Browser>
              <BrowserTabs>
                <BrowserTab $on aria-label="Patterns"><PianoUp /></BrowserTab>
                <BrowserTab aria-label="Audio"><WaveBig /></BrowserTab>
                <BrowserTab aria-label="Automation"><NodeIcon /></BrowserTab>
              </BrowserTabs>
              <ListFrame>
                <PatternList>
                  {[1, 2, 3, 4, 5, 6, 7, 8].map((n) => (
                    <PatternItem key={n}>
                      <PatternHead><PianoKeys /><span>Pattern {n}</span></PatternHead>
                      <PatternBody><MiniNotes n={n} /></PatternBody>
                      {n === 2 && (
                        <RedMark width="15" height="24" viewBox="0 0 15 24">
                          <path d="M1 1H4L13 12L4 23H1Z" fill="#ee4560" stroke="#1c1418" strokeWidth="1.500" />
                        </RedMark>
                      )}
                    </PatternItem>
                  ))}
                </PatternList>
                <ListScroll><ListThumb /></ListScroll>
              </ListFrame>
              <AddPattern aria-label="Add pattern">+</AddPattern>
            </Browser>

            <Playlist>
              <HeadRow>
                <HeadTools>
                  <AddTab><AddTrack aria-label="Add track">+</AddTrack></AddTab>
                  <ToolBox>
                    <BoxBtn $tone="#dbe3e7" aria-label="Audio clips"><WaveBig /></BoxBtn>
                    <BoxBtn $tone="#7b8388" aria-label="Automation clips"><NodeIcon /></BoxBtn>
                    <BoxBtn $tone="#7b8388" aria-label="Pattern clips"><PianoUp /></BoxBtn>
                    <BoxBtn $tone="#dbe3e7" aria-label="Crossfade">
                      <svg width="20" height="20" viewBox="0 0 20 20" fill="none" stroke="currentColor" strokeWidth="2.600">
                        <path d="M1 1.500C9 1.500 10 18.500 19 18.500M19 1.500C10 1.500 9 18.500 1 18.500" />
                      </svg>
                    </BoxBtn>
                    <BoxBtn $tone="#697177" aria-label="Slide">
                      <svg width="20" height="20" viewBox="0 0 20 20" fill="none" stroke="currentColor" strokeWidth="2">
                        <path d="M4 1V19M0 10H17M1 18C10 18 9 2 19 2" />
                      </svg>
                    </BoxBtn>
                    <BoxBtn $tone="#697177" aria-label="Stretch">
                      <svg width="22" height="16" viewBox="0 0 22 16" fill="none" stroke="currentColor" strokeWidth="2.400">
                        <path d="M8 1L2 8L8 15M14 1L20 8L14 15M3 8H9M13 8H19M10 5L12 11" />
                      </svg>
                    </BoxBtn>
                  </ToolBox>
                </HeadTools>
                <HeadRight>
                  <OverviewRow>
                    <ScrollBtn aria-label="Scroll left"><Chevron d="M13 3L7 10L13 17" /></ScrollBtn>
                    <OverviewTrack>
                      <OverviewThumb>
                        <svg viewBox={`0 0 ${BARS} 35`} preserveAspectRatio="none">
                          {TRACKS.map((t, row) =>
                            t.clips.map((c, i) => (
                              <rect key={`${row}-${i}`} x={c.s - 1} y={row * 2.3 + 0.3} width={c.e - c.s - 0.06} height={t.h === 8 ? 2 : 1.3} fill={c.kind === 'rev' ? '#6d9080' : c.kind.startsWith('swell') ? '#737f9b' : t.map} />
                            ))
                          )}
                        </svg>
                      </OverviewThumb>
                    </OverviewTrack>
                    <ScrollBtn aria-label="Scroll right"><Chevron d="M7 3L13 10L7 17" /></ScrollBtn>
                  </OverviewRow>
                  <Ruler>
                    {Array.from({ length: 31 }, (_, i) => <span key={i}>{i * 4 + 1}</span>)}
                    <StartMark width="17" height="20" viewBox="0 0 17 20">
                      <path d="M0 1H16L13 8L5 14L0 19Z" fill="#9ccb63" stroke="#e6f6b0" strokeWidth="1.500" />
                    </StartMark>
                  </Ruler>
                </HeadRight>
                <SideHead>
                  <ScrollBtn $w={33} $h={38} aria-label="Zoom"><Chevron d="M10 6V14M11 6V14" /></ScrollBtn>
                  <ScrollBtn $w={33} $h={37} aria-label="Scroll up"><Chevron d="M3 13L10 6L17 13" /></ScrollBtn>
                </SideHead>
              </HeadRow>

              <TrackArea>
                <Heads>
                  {TRACKS.map((t, i) => {
                    const first = i === 0 || TRACKS[i - 1].group !== t.group;
                    const last = i === TRACKS.length - 1 || TRACKS[i + 1].group !== t.group;
                    return (
                      <Head key={i} $c={t.c} $h={t.h} $child={t.child} $first={first} $last={last} $parent={!!t.parent}>
                        {t.name && (
                          <>
                            <TrackName $small={t.h < 100}>{t.name}</TrackName>
                            <HeadControls $small={t.h < 100}>
                              {t.fold && <Fold $down={t.fold === 'down'} aria-label={`Fold ${t.name}`} />}
                              <Led type="checkbox" defaultChecked aria-label={`${t.name} on`} />
                            </HeadControls>
                            {t.h > 100 && <Dots $child={t.child}><i /><i /><i /></Dots>}
                          </>
                        )}
                      </Head>
                    );
                  })}
                </Heads>
                <Faders>
                  {TRACKS.map((t, i) => <Fader key={i} $h={t.h} />)}
                </Faders>
                <Lanes>
                  <Grid>
                    {Array.from({ length: 62 }, (_, i) => <GridCell key={i} $dark={i % 4 > 1} />)}
                  </Grid>
                  {TRACKS.map((t, i) => (
                    <Lane key={i} $h={t.h}>
                      {t.clips.map((c, k) => <ClipView key={k} clip={c} track={t} />)}
                    </Lane>
                  ))}
                </Lanes>
                <VScroll>
                  <VThumb />
                  <ScrollBtn $w={33} aria-label="Scroll down"><Chevron d="M3 6L10 13L17 6" /></ScrollBtn>
                </VScroll>
              </TrackArea>
            </Playlist>
          </Work>
          <Bottom />
        </Main>
      </Shell>
    </App$>
  );
}
